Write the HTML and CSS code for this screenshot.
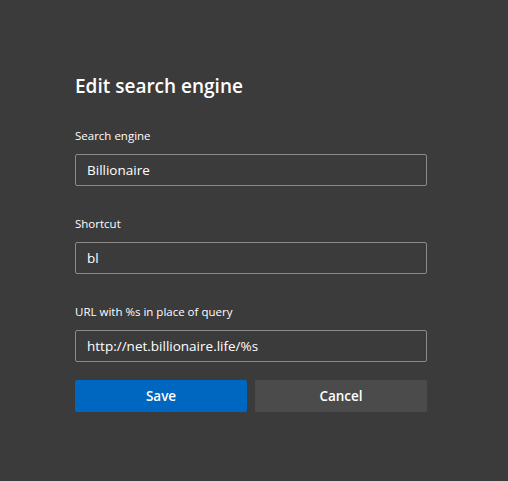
FILE: index.html
```html
<!DOCTYPE html>
<html lang="en">
<head>
    <meta charset="UTF-8">
    <meta name="viewport" content="width=device-width, initial-scale=1.0">
    <title>Edit search engine</title>
    <link rel="stylesheet" href="styles.css">
</head>
<body>

    <div class="dialog">
        <h1 class="dialog-title">Edit search engine</h1>

        <!-- Các trường nhập -->
        <div class="field">
            <label class="field-label" for="engine-name">Search engine</label>
            <input type="text" id="engine-name" class="field-input" value="Billionaire">
        </div>

        <div class="field">
            <label class="field-label" for="engine-shortcut">Shortcut</label>
            <input type="text" id="engine-shortcut" class="field-input" value="bl">
        </div>

        <div class="field field-last">
            <label class="field-label" for="engine-url">URL with %s in place of query</label>
            <input type="text" id="engine-url" class="field-input" value="http://net.billionaire.life/%s">
        </div>

        <div class="dialog-actions">
            <button class="btn btn-save">Save</button>
            <button class="btn btn-cancel">Cancel</button>
        </div>
    </div>

</body>
</html>
```

FILE: styles.css
```css
body {
    margin: 0;
    background-color: #3b3b3b;
    font-family: "Open Sans", "Noto Sans", sans-serif;
    color: #ffffff;
}

.dialog {
    width: 352px;
    padding: 72px 0 0 75px;
}

.dialog-title {
    margin: 0 0 28px;
    font-size: 19px;
    font-weight: 600;
    line-height: 28px;
}

.field {
    display: flex;
    flex-direction: column;
    margin-bottom: 30px;
}

.field-last {
    margin-bottom: 18px;
}

.field-label {
    font-size: 11.5px;
    line-height: 16px;
    margin-bottom: 10px;
}

.field-input {
    box-sizing: border-box;
    height: 32px;
    width: 100%;
    padding: 0 11px;
    background-color: #3b3b3b;
    border: 1px solid #8a8a8a;
    border-radius: 2px;
    color: #ffffff;
    font-family: inherit;
    font-size: 13.5px;
    outline: none;
}

.dialog-actions {
    display: flex;
    gap: 8px;
}

.btn {
    flex: 1;
    height: 32px;
    border: none;
    border-radius: 2px;
    color: #ffffff;
    font-family: inherit;
    font-size: 13.5px;
    font-weight: 600;
    cursor: pointer;
}

.btn-save {
    background-color: #0067c0;
}

.btn-cancel {
    background-color: #4b4b4b;
}
```
